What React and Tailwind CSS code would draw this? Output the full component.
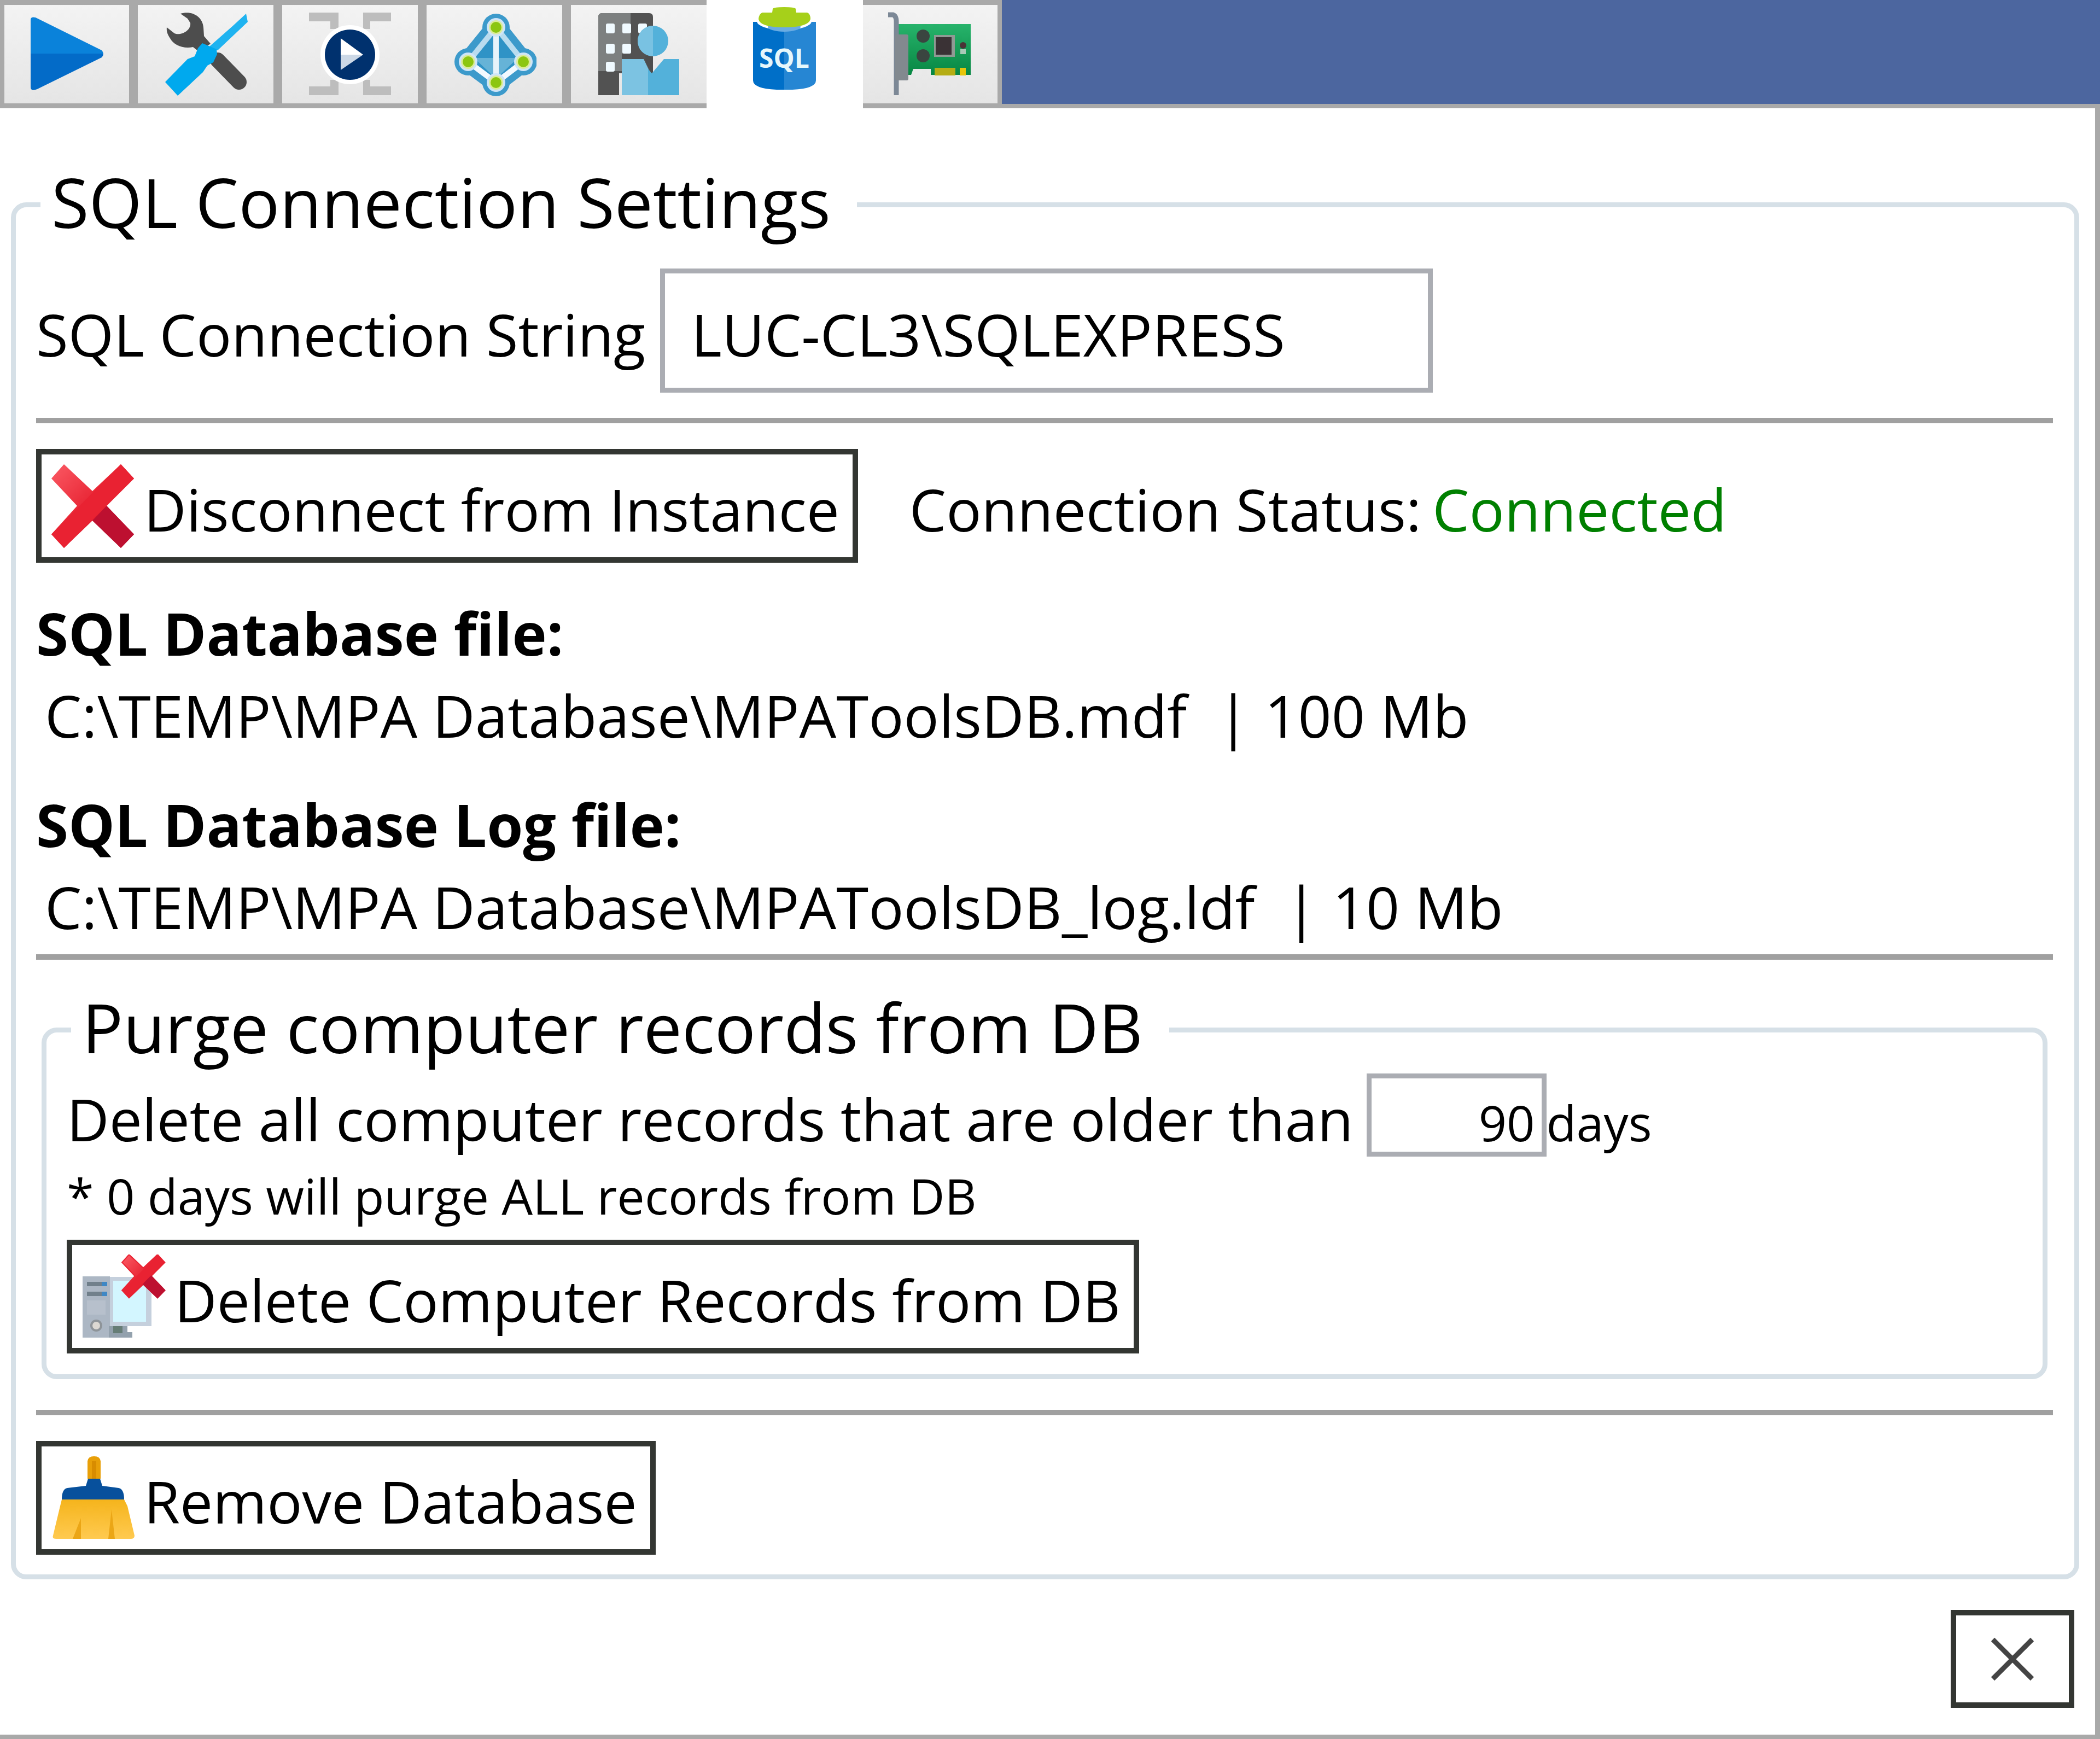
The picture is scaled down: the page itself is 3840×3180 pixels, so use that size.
import { useState } from 'react';

function Icon({ children }) {
  return (
    <svg viewBox="0 0 154 154" className="size-[154px] shrink-0" aria-hidden="true">
      {children}
    </svg>
  );
}

function PlayIcon() {
  return (
    <Icon>
      <path d="M11 14Q11 8 20 10L141 70Q144 73 144 77H11Z" fill="#0a82da" />
      <path d="M11 76H144Q144 80 141 83L23 141Q11 146 11 137Z" fill="#036bc8" />
    </Icon>
  );
}

function ToolsIcon() {
  return (
    <Icon>
      <path
        d="M31 3C52 -3 71 8 73 28L74 44L86 58L64 72L54 64C36 68 18 60 12 48C8 42 5 36 6 28L20 39C31 44 51 34 49 20L44 12Z"
        fill="#4d4d4d"
      />
      <path d="M99 88L138 128" stroke="#4d4d4d" strokeWidth="28" strokeLinecap="round" />
      <path d="M151 3L154 18L99 70L84 63L126 26Z" fill="#1fb3f0" />
      <path d="M71 57L97 68L98 77L91 92L80 98L72 110L26 153L3 128L44 86L57 81L63 66Z" fill="#00a9ee" />
    </Icon>
  );
}

function RunIcon() {
  return (
    <Icon>
      <path
        d="M2 1H56V31H41V17H2ZM152 1H101V31H114V17H152ZM2 152H56V124H41V136H2ZM152 152H101V124H114V136H152Z"
        fill="#bdbdbd"
      />
      <circle cx="77" cy="78" r="54" fill="#fff" />
      <circle cx="77" cy="78" r="46" fill="#00316e" />
      <path d="M60 48L101 78H60Z" fill="#fff" />
      <path d="M60 78H101L60 106Z" fill="#ccd8e6" />
    </Icon>
  );
}

function DirectoryIcon() {
  const nodes = [[80, 28], [29, 91], [130, 91], [80, 129]];
  return (
    <Icon>
      <path d="M80 28L29 91L80 129L130 91Z" fill="#3c9acb" stroke="#3c9acb" strokeWidth="36" strokeLinejoin="round" />
      {nodes.map(([cx, cy]) => (
        <circle key={`${cx}-${cy}`} cx={cx} cy={cy} r="25" fill="#3c9acb" />
      ))}
      <path d="M80 28L29 91L80 129L130 91Z" fill="#2f93c6" stroke="#b9dcef" strokeWidth="10" />
      <path d="M40 84H120L80 122Z" fill="#66b3d7" />
      <path d="M29 91L80 129L130 91" fill="none" stroke="#f2f9ff" strokeWidth="10" />
      <path d="M80 28V129" stroke="#e6f3fa" strokeWidth="10" />
      {nodes.map(([cx, cy]) => (
        <g key={`${cx}-${cy}`}>
          <circle cx={cx} cy={cy} r="17" fill="#cfe5f8" />
          <circle cx={cx} cy={cy} r="13" fill="#dcec9a" />
          <circle cx={cx} cy={cy} r="10" fill="#8cc611" />
        </g>
      ))}
    </Icon>
  );
}

function CompanyIcon() {
  const windows = [[17, 21], [47, 21], [76, 21], [17, 58], [47, 58], [17, 91]];
  return (
    <Icon>
      <path d="M10 2H96Q103 2 103 9V112H41V152H3V9Q3 2 10 2Z" fill="#525252" />
      <path d="M10 2H62V76H46V108H3V9Q3 2 10 2Z" fill="#7d8080" />
      {windows.map(([x, y]) => (
        <rect key={`${x}-${y}`} x={x} y={y} width="16" height="18" rx="3" fill="#f0faff" />
      ))}
      <path d="M46 86H86L99 113L94 152H46Z" fill="#7cc3e2" />
      <path d="M94 104L101 112L123 86H151V152H94Z" fill="#53b1da" />
      <path d="M89 80H103V108L100 112L90 92Z" fill="#4d4d4d" />
      <circle cx="103" cy="53" r="28" fill="#53b1da" />
      <path d="M103 25A28 28 0 0 0 103 81Z" fill="#79c2e2" />
    </Icon>
  );
}

function SqlIcon() {
  return (
    <Icon>
      <path d="M19 27H76V151H62Q19 149 19 134Z" fill="#006fc8" />
      <path d="M76 27H134V134Q134 149 91 151H76Z" fill="#2686d3" />
      <ellipse cx="76" cy="26" rx="50" ry="16" fill="#fff" />
      <ellipse cx="76" cy="36" rx="30" ry="9" fill="#6aace2" />
      <path d="M55 3Q57 0 76 0Q95 0 97 3L98 10H118Q124 12 124 22Q120 37 76 37Q32 37 29 22Q30 12 36 10H54Z" fill="#a6d01a" />
      <text x="76" y="111" textAnchor="middle" fill="#e6f7fb" className="font-['Open_Sans',sans-serif] text-[48px] font-bold">
        SQL
      </text>
    </Icon>
  );
}

function CardIcon() {
  return (
    <Icon>
      <defs>
        <linearGradient id="board" x1="0" y1="0" x2="0" y2="1">
          <stop offset="0" stopColor="#27b36b" />
          <stop offset="1" stopColor="#078743" />
        </linearGradient>
      </defs>
      <path d="M18 22H151V115H78V104H46L42 115H18Z" fill="url(#board)" />
      <path d="M0 5H9Q15 7 15 18V152" fill="none" stroke="#7c8896" strokeWidth="9" />
      <rect x="13" y="41" width="24" height="84" rx="3" fill="#82898f" />
      <circle cx="64" cy="44" r="12" fill="#3a4540" />
      <circle cx="64" cy="80" r="12" fill="#3a4540" />
      <rect x="84" y="42" width="38" height="40" fill="#8f9a94" />
      <rect x="87" y="46" width="29" height="32" fill="#3a3235" />
      <circle cx="137" cy="61" r="6" fill="#4a3436" />
      <rect x="132" y="68" width="10" height="9" fill="#a9c9b6" />
      <rect x="85" y="102" width="38" height="14" fill="#b5ad14" />
      <rect x="131" y="102" width="11" height="14" fill="#e6c50a" />
    </Icon>
  );
}

function RedCross() {
  return (
    <g>
      <defs>
        <linearGradient id="cross" x1="0" y1="0" x2="1" y2="1">
          <stop offset="0" stopColor="#fb5a64" />
          <stop offset="0.55" stopColor="#e51c2c" />
          <stop offset="1" stopColor="#b80d32" />
        </linearGradient>
      </defs>
      <path d="M24 1L76 50L128 1L152 27L102 77L152 129L128 154L76 104L24 154L1 129L48 77L1 27Z" fill="url(#cross)" />
      <path d="M102 77L152 129L128 154L76 104Z" fill="#bd1030" />
      <path d="M128 1L152 27L24 154L1 129Z" fill="#e92232" />
    </g>
  );
}

function DisconnectIcon() {
  return (
    <Icon>
      <RedCross />
    </Icon>
  );
}

function ComputerIcon() {
  return (
    <Icon>
      <rect x="50" y="41" width="78" height="90" fill="#c5d0dd" />
      <rect x="58" y="48" width="60" height="75" fill="#d3f6ff" />
      <rect x="2" y="40" width="50" height="112" fill="#acb7c4" />
      <path d="M10 50H37V58H10ZM10 68H37V76H10Z" fill="#71808b" />
      <path d="M37 50H47V58H37ZM37 68H47V76H37Z" fill="#3f88c5" />
      <rect x="10" y="84" width="34" height="26" fill="#b7c0cc" />
      <circle cx="27" cy="130" r="11" fill="#8e9499" />
      <circle cx="27" cy="130" r="7" fill="#dcd8d2" />
      <path d="M50 131H84V142H93V152H50Z" fill="#93a1ad" />
      <rect x="58" y="131" width="17" height="13" fill="#667d76" />
      <g transform="translate(75 1) scale(0.5)">
        <path d="M24 1L76 50L128 1L152 27L102 77L152 129L128 154L76 104L24 154L1 129L48 77L1 27Z" stroke="#e92232" strokeWidth="8" />
        <path d="M102 77L152 129L128 154L76 104Z" stroke="#bd1030" strokeWidth="8" />
        <RedCross />
      </g>
    </Icon>
  );
}

function BroomIcon() {
  return (
    <Icon>
      <defs>
        <linearGradient id="bristles" x1="0" y1="0" x2="0" y2="1">
          <stop offset="0" stopColor="#f5b41c" />
          <stop offset="1" stopColor="#ffca50" />
        </linearGradient>
      </defs>
      <path d="M67 42V10Q68 1 79 1Q90 1 91 10V42Z" fill="#e89f08" />
      <path d="M75 42V10H83V42Z" fill="#d88c00" />
      <path d="M68 42H90L94 55L124 59Q134 61 134 80H20Q20 61 30 59L64 55Z" fill="#07509c" />
      <path d="M20 80H134L140 92L153 146Q153 152 146 152H10Q2 152 4 146L17 92Z" fill="url(#bristles)" />
      <path d="M55 114V152H40ZM111 98L117 152H105Z" fill="#eba616" />
    </Icon>
  );
}

const tabs = [
  { id: 'run', label: 'Run', icon: PlayIcon, width: 'w-[244px]' },
  { id: 'tools', label: 'Tools', icon: ToolsIcon, width: 'w-[264px]' },
  { id: 'tasks', label: 'Tasks', icon: RunIcon, width: 'w-[264px]' },
  { id: 'directory', label: 'Directory', icon: DirectoryIcon, width: 'w-[264px]' },
  { id: 'company', label: 'Company', icon: CompanyIcon, width: 'w-[264px]' },
  { id: 'sql', label: 'SQL settings', icon: SqlIcon, width: 'w-[286px]' },
  { id: 'network', label: 'Network card', icon: CardIcon, width: 'w-[262px]' },
];

function Tab({ tab, active, onClick }) {
  const TabIcon = tab.icon;
  const look = active
    ? 'relative z-10 -mx-2 bg-white pb-[18px]'
    : 'border-x-8 border-y-[9px] border-[#a9a9a9] bg-linear-to-b from-[#f3f3f3] to-[#e5e5e5]';
  return (
    <button
      type="button"
      role="tab"
      aria-selected={active}
      aria-label={tab.label}
      onClick={onClick}
      className={`flex items-center justify-center ${tab.width} ${look}`}
    >
      <TabIcon />
    </button>
  );
}

function Divider({ className }) {
  return <hr className={`h-[10px] border-0 bg-[#a0a0a0] ${className}`} />;
}

function GroupBox({ title, className, children }) {
  return (
    <fieldset className={`rounded-[28px] border-[9px] border-[#d6e0e7] pl-[45px] ${className}`}>
      <legend className="pr-[48px] pb-[10px] pl-[20px] text-[125px] leading-[150px]">{title}</legend>
      <div className="-ml-2">{children}</div>
    </fieldset>
  );
}

function ActionButton({ icon, children }) {
  return (
    <button type="button" className="flex h-[208px] items-center gap-4 border-[10px] border-[#333632] bg-white pr-[24px] pl-[17px]">
      {icon}
      <span className="pt-3">{children}</span>
    </button>
  );
}

function DatabaseFile({ title, path, size }) {
  return (
    <div>
      <h2 className="font-bold">{title}</h2>
      <p className="pl-4 whitespace-pre">{`${path}  | ${size}`}</p>
    </div>
  );
}

export default function App() {
  const [activeTab, setActiveTab] = useState('sql');
  const [server, setServer] = useState('LUC-CL3\\SQLEXPRESS');
  const [days, setDays] = useState('90');

  return (
    <div className="flex min-h-screen flex-col bg-white font-['Open_Sans',sans-serif] text-[107px] leading-[150px] text-black">
      <header className="flex h-[198px]">
        <div role="tablist" className="flex">
          {tabs.map((tab) => (
            <Tab key={tab.id} tab={tab} active={tab.id === activeTab} onClick={() => setActiveTab(tab.id)} />
          ))}
        </div>
        <div className="flex-1 border-b-8 border-[#a9a9a9] bg-[#4c669f]" />
      </header>

      <main className="flex flex-1 flex-col border-r-[9px] border-b-8 border-[#a9a9a9] pt-[96px] pr-[29px] pb-[48px] pl-[20px]">
        <GroupBox title="SQL Connection Settings" className="pr-[39px] pb-[36px]">
          <div className="mt-[37px] flex items-center gap-[27px]">
            <label htmlFor="server" className="pt-3">SQL Connection String</label>
            <input
              id="server"
              type="text"
              value={server}
              onChange={(e) => setServer(e.target.value)}
              className="h-[227px] w-[1413px] border-[9px] border-[#abadb3] bg-white pt-3 pl-[48px] outline-none"
            />
          </div>

          <Divider className="mt-[46px]" />

          <div className="mt-[47px] flex items-center">
            <ActionButton icon={<DisconnectIcon />}>Disconnect from Instance</ActionButton>
            <p className="ml-[94px] flex gap-[20px] pt-3">
              <span>Connection Status:</span>
              <span className="text-[#008000]">Connected</span>
            </p>
          </div>

          <div className="mt-[54px] flex flex-col gap-[50px]">
            <DatabaseFile title="SQL Database file:" path="C:\TEMP\MPA Database\MPAToolsDB.mdf" size="100 Mb" />
            <DatabaseFile title="SQL Database Log file:" path="C:\TEMP\MPA Database\MPAToolsDB_log.ldf" size="10 Mb" />
          </div>

          <Divider className="mt-3" />

          <GroupBox title="Purge computer records from DB" className="mx-[10px] mt-[48px] pr-[37px] pb-[38px]">
            <div className="flex items-baseline">
              <label htmlFor="days" className="-mt-[20px]">Delete all computer records that are older than</label>
              <input
                id="days"
                type="text"
                value={days}
                onChange={(e) => setDays(e.target.value)}
                className="ml-6 h-[152px] w-[329px] border-[9px] border-[#abadb3] bg-white pt-[26px] pr-3 text-right text-[90px] leading-[108px] outline-none"
              />
              <span className="text-[90px] leading-[108px]">days</span>
            </div>
            <p className="text-[90px] leading-[130px]">* 0 days will purge ALL records from DB</p>
            <div className="mt-4 flex">
              <ActionButton icon={<ComputerIcon />}>Delete Computer Records from DB</ActionButton>
            </div>
          </GroupBox>

          <Divider className="mt-[56px]" />

          <div className="mt-[47px] flex">
            <ActionButton icon={<BroomIcon />}>Remove Database</ActionButton>
          </div>
        </GroupBox>

        <div className="mt-[56px] flex justify-end pr-[9px]">
          <button type="button" aria-label="Close" className="flex h-[179px] w-[226px] items-center justify-center border-[10px] border-[#333632] bg-white">
            <svg viewBox="0 0 84 84" className="size-[84px]" aria-hidden="true">
              <path d="M6 6L78 78M78 6L6 78" stroke="#444" strokeWidth="9" />
            </svg>
          </button>
        </div>
      </main>
    </div>
  );
}
